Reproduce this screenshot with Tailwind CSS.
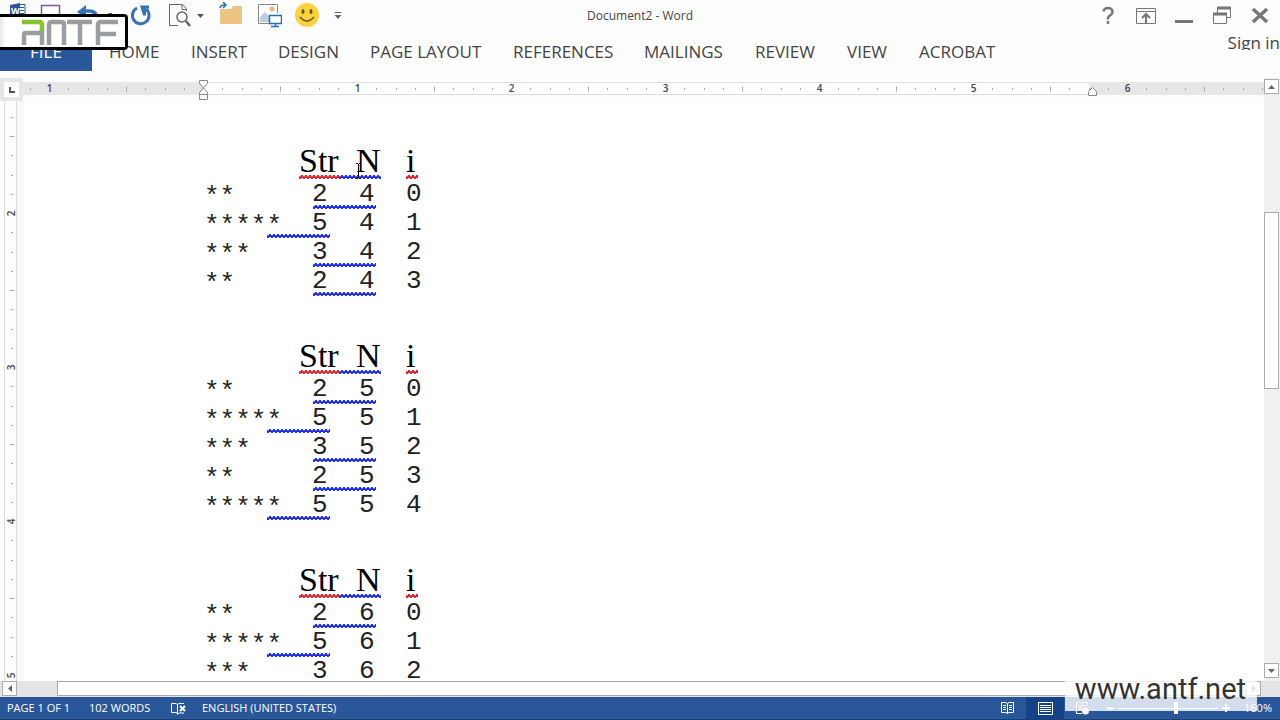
<!DOCTYPE html>
<html lang="en">
<head>
    <meta charset="UTF-8" />
    <meta name="viewport" content="width=device-width, initial-scale=1.0" />
    <title>Document2 - Word</title>
    <script src="https://cdn.jsdelivr.net/npm/@tailwindcss/browser@4"></script>
</head>
<body class="bg-[#fdfdfd] font-['Open_Sans','Noto_Sans',sans-serif] text-[#444]">
<!-- shared zigzag patterns for the proofing marks -->
<svg class="absolute size-0" aria-hidden="true">
    <defs>
        <pattern id="zig-red" width="4" height="4" patternUnits="userSpaceOnUse"><path d="M-1 0 L1 3 L3 0 L5 3" transform="translate(0 .5)" fill="none" stroke="#d8232a" stroke-width="1.700" /></pattern>
        <pattern id="zig-blue" width="4" height="4" patternUnits="userSpaceOnUse"><path d="M-1 0 L1 3 L3 0 L5 3" transform="translate(0 .5)" fill="none" stroke="#1a2be0" stroke-width="1.700" /></pattern>
    </defs>
</svg>

<div class="relative flex h-screen flex-col overflow-hidden">
    <!-- title bar -->
    <header class="flex h-8 shrink-0 items-center justify-between">
        <div class="flex flex-1 items-center">
            <svg class="ml-2 h-7 w-8" viewBox="0 0 32 28" aria-hidden="true">
                <path d="M10 2.500h7v20h-7z" fill="#fff" stroke="#2a579a" />
                <path d="M12 5.500h4M12 8.500h4M12 11.500h4" stroke="#2a579a" />
                <path d="M2 3l10-2v22l-10-2z" fill="#2a579a" />
                <text x="3" y="12" font-size="9" font-weight="700" fill="#fff">W</text>
            </svg>
            <button class="h-7 w-8" aria-label="Save">
                <svg class="h-7 w-8" viewBox="0 0 32 28"><path d="M1.500 3.500h18v18h-18z" fill="#fff" stroke="#8455a5" stroke-width="1.500" /></svg>
            </button>
            <button class="ml-1 h-7 w-9" aria-label="Undo">
                <svg class="h-7 w-9" viewBox="0 0 36 28"><path d="M5 9h8q8 0 8 8" fill="none" stroke="#3a73b5" stroke-width="3.500" /><path d="M1 10l9-7v13z" fill="#3a73b5" /><path d="M32 11h7l-3.500 4z" fill="#555" /></svg>
            </button>
            <button class="ml-[17px] h-7 w-6" aria-label="Repeat">
                <svg class="h-7 w-6" viewBox="0 0 24 28"><path d="M8 6a8.300 8.300 0 1 0 9 1" fill="none" stroke="#3a73b5" stroke-width="3" /><path d="M11 3.500h9v3h-3v7h-3z" fill="#3a73b5" /></svg>
            </button>
            <button class="ml-4 h-7 w-9" aria-label="Print preview">
                <svg class="h-7 w-9" viewBox="0 0 36 28"><path d="M17.500 9V7l-4-4.500H.5v21H9M13 3v4.500h4.500" fill="none" stroke="#666" /><circle cx="13" cy="15" r="5" fill="#fff" stroke="#666" stroke-width="1.500" /><path d="M17 19l4 5" stroke="#666" stroke-width="2.500" /><path d="M28 12h7l-3.500 4z" fill="#555" /></svg>
            </button>
            <button class="ml-[14px] h-7 w-6" aria-label="Open">
                <svg class="h-7 w-6" viewBox="0 0 24 28"><path d="M1 22V7h11l2-3h9v18z" fill="#ecc584" /><path d="M1 6q0-3 5-3M4 0l3 3-3 3" fill="none" stroke="#2a6db5" stroke-width="1.500" /></svg>
            </button>
            <button class="ml-[15px] h-7 w-6" aria-label="Online pictures">
                <svg class="h-7 w-6" viewBox="0 0 24 28"><path d="M19.500 11V2.500H.5v19h11" fill="#fff" stroke="#888" /><circle cx="14" cy="7" r="2.500" fill="#efb878" /><path d="M2 20v-5l5-5 5 5v5z" fill="#b9cde3" /><path d="M11.500 13.500h12v8h-12zM17.500 21.500v3M13 24.500h8" fill="#fff" stroke="#2a70b0" stroke-width="1.500" /></svg>
            </button>
            <button class="ml-[13px] h-7 w-6" aria-label="Smiley">
                <svg class="h-7 w-6" viewBox="0 0 24 28"><circle cx="12" cy="13" r="12" fill="#fdd23e" /><ellipse cx="8" cy="9.500" rx="1.500" ry="2.500" fill="#6b5410" /><ellipse cx="16" cy="9.500" rx="1.500" ry="2.500" fill="#6b5410" /><path d="M5 15q7 8 14 0" fill="none" stroke="#6b5410" stroke-width="1.500" /></svg>
            </button>
            <button class="ml-[15px] h-7 w-2" aria-label="Customize toolbar">
                <svg class="h-7 w-2" viewBox="0 0 8 28"><path d="M.5 10.500h7" stroke="#666" /><path d="M.5 13h7l-3.500 4z" fill="#666" /></svg>
            </button>
        </div>
        <h1 class="text-xs">Document2 - Word</h1>
        <div class="flex flex-1 items-center justify-end gap-[14px]">
            <button class="h-6 w-6" aria-label="Help"><svg class="size-6" viewBox="0 0 24 24"><path d="M7.500 7.500q.5-3.500 4.500-3.500t4.500 3.500q0 2.500-2.500 4t-2 4M12 17v3" fill="none" stroke="#777" stroke-width="2.500" /></svg></button>
            <button class="h-6 w-6" aria-label="Ribbon display options"><svg class="size-6" viewBox="0 0 24 24"><path d="M2.500 4.500h19v15h-19zM2.500 7.500h19" fill="none" stroke="#777" /><path d="M12 19V10M8 14l4-4 4 4" fill="none" stroke="#777" stroke-width="2" /></svg></button>
            <button class="h-6 w-6" aria-label="Minimize"><svg class="size-6" viewBox="0 0 24 24"><path d="M3 16h18v3H3z" fill="#777" /></svg></button>
            <button class="h-6 w-6" aria-label="Restore"><svg class="size-6" viewBox="0 0 24 24"><path d="M7.500 9V3.500h13v10H17" fill="none" stroke="#777" /><path d="M7 4h14M3 10h14" stroke="#777" stroke-width="3" /><path d="M3.500 9.500h13v10h-13z" fill="none" stroke="#777" /></svg></button>
            <button class="mr-2 h-6 w-6" aria-label="Close"><svg class="size-6" viewBox="0 0 24 24"><path d="M5 5l14 13M19 5L5 18" stroke="#777" stroke-width="3.500" /></svg></button>
        </div>
    </header>

    <!-- ribbon tabs -->
    <nav class="flex h-[39px] shrink-0 justify-between overflow-hidden text-[17px]">
        <div class="grid grid-cols-[109px_82px_87px_92px_143px_131px_111px_92px_72px_84px] items-center justify-items-start whitespace-nowrap">
            <a href="#" class="flex h-full w-[92px] items-center justify-center bg-[#2a579a] text-white">FILE</a>
            <a href="#">HOME</a>
            <a href="#">INSERT</a>
            <a href="#">DESIGN</a>
            <a href="#">PAGE LAYOUT</a>
            <a href="#">REFERENCES</a>
            <a href="#">MAILINGS</a>
            <a href="#">REVIEW</a>
            <a href="#">VIEW</a>
            <a href="#">ACROBAT</a>
        </div>
        <a href="#" class="h-[18px] overflow-hidden leading-[22px] whitespace-nowrap">Sign in</a>
    </nav>

    <!-- workspace -->
    <main class="mt-[7px] flex min-h-0 flex-1">
        <div class="flex min-w-0 flex-1 flex-col">
            <div class="flex h-[23px] shrink-0 items-center">
                <button class="flex size-[23px] items-center justify-center bg-[#e6e6e6]" aria-label="Tab selector">
                    <svg class="size-[15px] bg-white" viewBox="0 0 15 15"><path d="M6 5v5h5" fill="none" stroke="#555" stroke-width="2" /></svg>
                </button>
                <svg id="ruler-x" class="h-5 min-w-0 flex-1 font-semibold" aria-hidden="true"></svg>
            </div>
            <div class="flex min-h-0 flex-1 bg-[#fdfdfd]">
                <svg id="ruler-y" class="h-full w-6 shrink-0 font-semibold" aria-hidden="true"></svg>
                <article id="page" class="min-w-0 flex-1 overflow-hidden bg-white pt-10 pl-[180px] text-black"></article>
            </div>
        </div>
        <!-- vertical scroll bar -->
        <div class="flex w-4 shrink-0 flex-col bg-[#f0f0f0] pt-px">
            <button class="mr-px flex h-[15px] items-center justify-center border border-[#ababab] bg-white" aria-label="Scroll up"><svg class="h-1 w-[7px]" viewBox="0 0 7 4"><path d="M0 4L3.500 0 7 4z" fill="#666" /></svg></button>
            <div class="mt-[118px] mr-px h-[177px] border border-[#ababab] bg-white"></div>
            <button class="mt-auto mr-px mb-[3px] flex h-[15px] items-center justify-center border border-[#ababab] bg-white" aria-label="Scroll down"><svg class="h-1 w-[7px]" viewBox="0 0 7 4"><path d="M0 0h7L3.500 4z" fill="#666" /></svg></button>
        </div>
    </main>

    <!-- horizontal scroll bar -->
    <div class="flex h-4 shrink-0 bg-[#e4e4e4] pb-px pl-[2px]">
        <button class="flex w-[15px] items-center justify-center border border-[#ababab] bg-white" aria-label="Scroll left"><svg class="h-[7px] w-1" viewBox="0 0 4 7"><path d="M4 0v7L0 3.500z" fill="#666" /></svg></button>
        <div class="ml-10 flex-1 border border-[#ababab] bg-white"></div>
        <button class="mr-[19px] flex w-[15px] items-center justify-center border border-[#ababab] bg-white" aria-label="Scroll right"><svg class="h-[7px] w-1" viewBox="0 0 4 7"><path d="M0 0v7l4-3.500z" fill="#666" /></svg></button>
    </div>

    <!-- status bar -->
    <footer class="flex h-[23px] shrink-0 items-center justify-between border-b border-[#1d3f70] bg-[#2a579a] text-[11px] text-white">
        <div class="flex items-center whitespace-nowrap">
            <span class="ml-[7px] w-[82px]">PAGE 1 OF 1</span>
            <span class="w-[82px]">102 WORDS</span>
            <svg class="h-[13px] w-[31px]" viewBox="0 0 31 13" aria-hidden="true"><path d="M6.500 11.500L5 10.500H.5v-9H5l1.500 1 1.500-1h5M6.500 2.500v10l1.500-1.500h5" fill="none" stroke="#fff" /><path d="M9 4l5 5M14 4L9 9" stroke="#fff" stroke-width="2" /></svg>
            <span>ENGLISH (UNITED STATES)</span>
        </div>
        <div class="flex h-full items-center">
            <button class="h-full w-[38px]" aria-label="Read mode"><svg class="mx-auto h-3 w-[13px]" viewBox="0 0 13 12"><path d="M6.500 1.500L5 .5H.5v10H5l1.500 1 1.500-1h4.500V.5H8zM6.500 1v11M2 3.500h3M2 5.500h3M2 7.500h3M8 3.500h3M8 5.500h3M8 7.500h3" fill="none" stroke="#fff" /></svg></button>
            <button class="h-full w-[38px] bg-[#15438a]" aria-label="Print layout"><svg class="mx-auto h-[13px] w-[15px]" viewBox="0 0 15 13"><path d="M.5.5h14v12H.5zM2 3.500h11M2 5.500h11M2 7.500h11M2 9.500h11" fill="none" stroke="#fff" /></svg></button>
            <button class="h-full w-[38px]" aria-label="Web layout"><svg class="mx-auto h-[13px] w-[14px]" viewBox="0 0 14 13"><path d="M11.500 4V.5H.5v11H6M2 3.500h8M2 5.500h5M2 7.500h4" fill="none" stroke="#fff" /><circle cx="9.500" cy="9" r="3.500" fill="#fff" /></svg></button>
            <button class="ml-1 h-full w-2" aria-label="Zoom out"><svg class="mx-auto size-[7px]" viewBox="0 0 7 7"><path d="M0 3.500h7" stroke="#fff" stroke-width="2" /></svg></button>
            <input type="range" min="0" max="100" value="58" aria-label="Zoom" class="mx-1 h-3 w-[100px] appearance-none bg-[linear-gradient(#fff,#fff)] bg-[length:100%_1px] bg-center bg-no-repeat [&::-webkit-slider-thumb]:h-3 [&::-webkit-slider-thumb]:w-1 [&::-webkit-slider-thumb]:appearance-none [&::-webkit-slider-thumb]:bg-white" />
            <button class="h-full w-2" aria-label="Zoom in"><svg class="size-2" viewBox="0 0 8 8"><path d="M0 4h8M4 0v8" stroke="#fff" stroke-width="2" /></svg></button>
            <span class="mr-2 ml-[14px]">160%</span>
        </div>
    </footer>

    <!-- channel logo over the ribbon -->
    <div class="absolute top-[14px] left-0 h-9 w-32 rounded-r-sm border-3 border-l-0 border-black bg-linear-to-r from-[#e8e8e8] to-white to-5%">
        <svg class="h-full w-full" viewBox="0 0 125 30" role="img" aria-label="ANTF">
            <g fill="none" stroke="#9b9ea1" stroke-width="4.500">
                <path d="M24 28V18q0-2 2-2h16M42 12v16" />
                <path d="M49 28V8q0-3 3-3h9q3 0 3 3v20" />
                <path d="M67 5h25M80 5v23" />
                <path d="M118 5h-17q-3 0-3 3v20M98 17h18" />
            </g>
            <path d="M22 5h17q3 0 3 3v6" fill="none" stroke="#86c232" stroke-width="4.500" />
        </svg>
    </div>

    <!-- site watermark over the status bar -->
    <div class="absolute right-[23px] bottom-[9px] h-[30px] w-[192px] bg-white/80"></div>
    <p class="absolute right-[34px] bottom-[13px] font-['Roboto','Liberation_Sans',sans-serif] text-[29px] leading-[36px] text-[#333]">www.antf.net</p>

    <!-- text cursor -->
    <svg class="absolute top-[163px] left-[355px] h-4 w-[7px]" viewBox="0 0 7 16" aria-hidden="true"><path d="M1 .5h2M4 .5h2M3.500 1v14M1 15.500h2M4 15.500h2" fill="none" stroke="#000" /></svg>
</div>

<script>
    // trace tables: stars holds the string lengths, n the limit, the row number is i
    const stars = [2, 5, 3, 2, 5, 3];
    const tables = [{ n: 4, rows: 4 }, { n: 5, rows: 5 }, { n: 6, rows: 3 }];

    const zig = (color, cls) => `<svg class="${cls}" aria-hidden="true"><rect width="100%" height="100%" fill="url(#zig-${color})" /></svg>`;

    document.getElementById('page').innerHTML = tables.map(({ n, rows }) => `
        <table class="mb-10 w-[224px] table-fixed border-collapse text-left">
            <thead>
                <tr class="h-[39px] font-['Liberation_Serif',serif] text-[34px] leading-[39px] [&>th]:p-0 [&>th]:font-normal">
                    <th class="w-[95px]"></th>
                    <th class="relative w-[57px]">Str${zig('red', 'absolute bottom-px left-0 h-1 w-10')}${zig('blue', 'absolute bottom-px left-10 h-1 w-[42px]')}</th>
                    <th class="w-[50px]">N</th>
                    <th class="relative w-[22px]">i${zig('red', 'absolute bottom-px left-0 h-1 w-3')}</th>
                </tr>
            </thead>
            <tbody class="font-['Liberation_Mono',monospace] text-[26px] text-[#222]">
                ${stars.slice(0, rows).map((s, i) => `
                <tr class="h-[29px] leading-[29px] [&>td]:p-0">
                    <td class="leading-[23px]"><span class="block pt-[6px]">${'*'.repeat(s)}</span></td>
                    <td class="relative"><span class="ml-[13px]">${s}</span>${s === 5
                        ? zig('blue', 'absolute bottom-0 -left-8 h-1 w-[63px]')
                        : zig('blue', 'absolute bottom-0 left-[14px] h-1 w-[63px]')}</td>
                    <td><span class="ml-[3px]">${n}</span></td>
                    <td>${i}</td>
                </tr>`).join('')}
            </tbody>
        </table>`).join('');

    // rulers: one inch is 154px, a tick at every eighth
    const INCH = 154;
    const tick = (k, pos, flip) => {
        const num = Math.abs(k) / 8;
        if (k % 8 === 0) {
            if (!num) return '';
            return flip
                ? `<text transform="translate(15 ${pos}) rotate(-90)" text-anchor="middle" font-size="10" fill="#444">${num}</text>`
                : `<text x="${pos}" y="12" text-anchor="middle" font-size="10" fill="#444">${num}</text>`;
        }
        const len = k % 4 === 0 ? 5 : 2;
        return flip
            ? `<path d="M${12 - len / 2} ${pos}h${len}" stroke="#aaa" />`
            : `<path d="M${pos} ${9 - len / 2}v${len}" stroke="#aaa" />`;
    };

    const zero = 180;
    let across = '<rect y="2" width="100%" height="13" fill="#e6e6e6" /><path d="M180 2.500h887v12H180z" fill="#fff" stroke="#ddd" />';
    for (let k = -9; k <= 55; k++) across += tick(k, Math.round(zero + k * INCH / 8) + .5);
    across += '<path d="M176.500.5h8v3l-4 4.500 4 4.500v2h-8v-2l4-4.500-4-4.500zM176.500 14.500h8v5h-8z" fill="#fff" stroke="#888" />';
    across += '<path d="M1065.500 15.500v-4l4-4 4 4v4z" fill="#fff" stroke="#888" />';
    document.getElementById('ruler-x').innerHTML = across;

    let down = '<path d="M17 0h7v700h-7z" fill="#f8f8f8" /><path d="M4.500 0v700M16.500 0v700" stroke="#ddd" />';
    for (let k = 11; k <= 40; k++) down += tick(k, Math.round(112 + (k - 16) * INCH / 8) + .5, true);
    document.getElementById('ruler-y').innerHTML = down;
</script>
</body>
</html>
